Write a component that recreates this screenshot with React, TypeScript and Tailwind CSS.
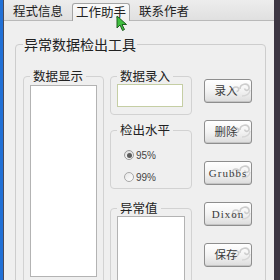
import React from "react";

const cjk = { fontFamily: '"Noto Sans CJK SC", "Noto Sans", sans-serif' };

function Swirl() {
  return (
    <svg className="absolute right-[0px] top-[0px]" width="22" height="18" viewBox="0 0 22 18" fill="none">
      <path d="M7 14 C2.5 14 2.5 7 7 7 C10.5 7 10.5 11.5 7.5 11.5" stroke="#cdcdcd" strokeWidth="1.6" />
      <path d="M11 9 C11 3.5 19 2.5 20 7 C20.8 10.5 16.5 11.5 15.5 8.5" stroke="#cdcdcd" strokeWidth="1.6" />
      <path d="M13 16 C17.5 16 21 13.5 21 10" stroke="#d6d6d6" strokeWidth="1.4" />
    </svg>
  );
}

function Btn({ label, mono }: { label: string; mono?: boolean }) {
  return (
    <div className="relative w-[48px] h-[24px] rounded-[3px] border border-[#8e8e8e] bg-gradient-to-b from-[#ffffff] via-[#f3f3f3] to-[#dcdcdc] flex items-center justify-center shadow-[inset_0_-1px_0_#c4c4c4]">
      <Swirl />
      <span
        className={mono ? "relative text-[11px] tracking-[1px] text-[#3a3a3a] leading-none" : "relative pr-[4px] text-[11.5px] text-[#3a3a3a] leading-none"}
        style={mono ? { fontFamily: '"Liberation Serif", serif' } : cjk}
      >
        {label}
      </span>
    </div>
  );
}

function Radio({ checked, label }: { checked?: boolean; label: string }) {
  return (
    <div className="h-[20px] flex items-center gap-[2px]">
      <span
        className={
          checked
            ? "w-[10px] h-[10px] rounded-full border border-[#9a9a9a] bg-gradient-to-b from-[#e0e0e0] to-[#f8f8f8] flex items-center justify-center"
            : "w-[10px] h-[10px] rounded-full border border-[#a8a8a8] bg-gradient-to-br from-[#e6e6e6] to-[#ffffff]"
        }
      >
        {checked && <span className="w-[5px] h-[5px] rounded-full bg-[#5c5c5c]" />}
      </span>
      <span className="text-[10px] text-[#444]" style={{ fontFamily: '"Liberation Sans", sans-serif' }}>
        {label}
      </span>
    </div>
  );
}

export default function App() {
  return (
    <div className="relative w-[280px] h-[280px] overflow-hidden flex bg-[#efefef]" style={cjk}>
      <div className="w-[3px] h-full bg-[#2170d6]" />
      <div className="w-[1px] h-full bg-[#4a4a58]" />
      <div className="w-[270px] h-full flex flex-col">
        <div className="h-[21px] shrink-0 flex items-end bg-gradient-to-b from-[#ededed] to-[#e0e0e0] border-b border-[#b9b9b9]">
          <div className="ml-[5px] w-[58px] h-[18px] flex items-center justify-center text-[12.5px] text-[#222] leading-none">程式信息</div>
          <div className="ml-[5px] w-[58px] h-[18px] mb-[-1px] flex items-center justify-center text-[12.5px] text-[#222] leading-none rounded-t-[3px] border border-b-0 border-[#a4a4a4] bg-gradient-to-b from-[#fafafa] to-[#eeeeee]">工作助手</div>
          <div className="ml-[5px] w-[58px] h-[18px] flex items-center justify-center text-[12.5px] text-[#222] leading-none">联系作者</div>
        </div>
        <fieldset className="ml-[11px] mt-[14px] w-[251px] border border-[#cdcdcd] rounded-[4px] pl-[7px] pb-[10px]">
          <legend className="px-[1px] text-[14px] leading-[18px] text-[#222]">异常数据检出工具</legend>
          <div className="flex">
            <fieldset className="mt-[15px] w-[81px] border border-[#d2d2d2] rounded-[4px] pl-[6px] pr-[6px] pb-[6px]">
              <legend className="px-[3px] text-[12.5px] leading-[16px] text-[#222]">数据显示</legend>
              <div className="mt-[1px] w-[67px] h-[192px] bg-white border border-[#b3b3b3]" />
            </fieldset>
            <div className="ml-[6px] w-[82px] flex flex-col">
              <fieldset className="mt-[15px] border border-[#d2d2d2] rounded-[4px] pl-[6px] pb-[7px]">
                <legend className="px-[3px] text-[12.5px] leading-[16px] text-[#222]">数据录入</legend>
                <div className="w-[66px] h-[23px] bg-white border border-[#c5cea4]" />
              </fieldset>
              <fieldset className="mt-[7px] border border-[#d2d2d2] rounded-[4px] pl-[13px] pt-[7px] pb-[1px]">
                <legend className="ml-[-7px] px-[3px] text-[12.5px] leading-[16px] text-[#222]">检出水平</legend>
                <div className="flex flex-col gap-[2px]">
                  <Radio checked label="95%" />
                  <Radio label="99%" />
                </div>
              </fieldset>
              <fieldset className="mt-[11px] border border-[#d2d2d2] rounded-[4px] pl-[6px] pb-[6px]">
                <legend className="px-[3px] text-[12.5px] leading-[16px] text-[#222]">异常值</legend>
                <div className="w-[68px] h-[80px] bg-white border border-[#b3b3b3]" />
              </fieldset>
            </div>
            <div className="ml-[12px] mt-[26px] flex flex-col gap-[17px]">
              <Btn label="录入" />
              <Btn label="删除" />
              <Btn label="Grubbs" mono />
              <Btn label="Dixon" mono />
              <Btn label="保存" />
            </div>
          </div>
        </fieldset>
      </div>
      <div className="w-[6px] h-full bg-[#3d3743]" />
      <svg className="absolute left-[116px] top-[15px]" width="12" height="17" viewBox="0 0 12 17">
        <path d="M1 1 L1 13 L4 10 L6.5 15.5 L8.5 14.5 L6 9.5 L10.5 9.5 Z" fill="#3fbf3f" stroke="#1f5f1f" strokeWidth="1" strokeLinejoin="round" />
      </svg>
    </div>
  );
}
